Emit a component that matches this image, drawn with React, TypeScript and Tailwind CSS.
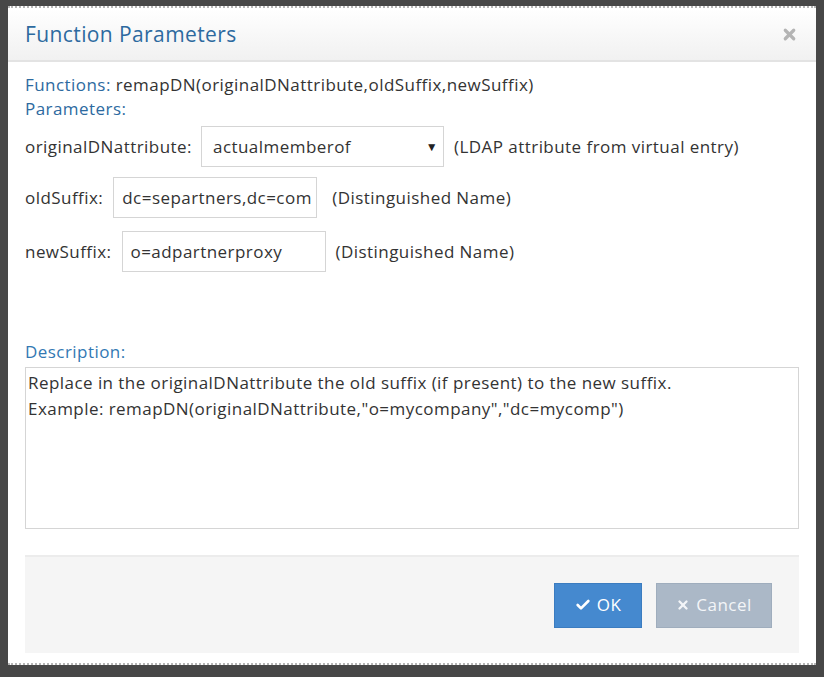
import { Check, X } from "lucide-react"

function Field({ label, value, width, hint, gap, top }: { label: string; value: string; width: string; hint: string; gap: string; top: string }) {
  return (
    <div className={`flex items-center ${top}`}>
      <span className="mr-[10px]">{label}</span>
      <div className={`h-[41px] ${width} border border-[#d5d5d5] bg-white flex items-center pl-[8px] shrink-0`}>{value}</div>
      <span className={gap}>{hint}</span>
    </div>
  )
}

export default function App() {
  return (
    <div className="w-[824px] h-[677px] bg-[#474747] pt-[6px] pl-[8px] overflow-hidden" style={{ fontFamily: '"Open Sans", "Liberation Sans", sans-serif' }}>
      <div className="w-[808px] h-[659px] bg-white border-t-2 border-b-2 border-dotted border-[#b5b5b5] flex flex-col text-[17px] tracking-[0.45px] text-[#333]">
        {/* header */}
        <div className="h-[54px] shrink-0 flex items-center justify-between pl-[17px] pr-[18px] bg-gradient-to-b from-white to-[#f1f1f1] border-b-2 border-[#e3e3e3]">
          <h2 className="text-[21px] tracking-[0.4px] text-[#2d6a9f] pt-[2px]">Function Parameters</h2>
          <X className="w-[17px] h-[17px] text-[#b4b4b4]" strokeWidth={4.5} />
        </div>

        {/* body */}
        <div className="flex flex-col px-[17px] pt-[12px]">
          <div className="leading-[22px]">
            <span className="text-[#2d6a9f]">Functions:</span> remapDN(originalDNattribute,oldSuffix,newSuffix)
          </div>
          <div className="leading-[22px] mt-[2px] text-[#2d6a9f]">Parameters:</div>

          <div className="flex flex-col mt-[6px]">
            <div className="flex items-center">
              <span className="mr-[9px]">originalDNattribute:</span>
              <div className="h-[41px] w-[243px] border border-[#d5d5d5] bg-white flex items-center justify-between pl-[11px] pr-[5px] shrink-0">
                <span>actualmemberof</span>
                <span className="text-[12px] text-[#222]">▼</span>
              </div>
              <span className="ml-[10px]">(LDAP attribute from virtual entry)</span>
            </div>
            <Field label="oldSuffix:" value="dc=separtners,dc=com" width="w-[204px]" hint="(Distinguished Name)" gap="ml-[15px]" top="mt-[10px]" />
            <Field label="newSuffix:" value="o=adpartnerproxy" width="w-[204px]" hint="(Distinguished Name)" gap="ml-[10px]" top="mt-[13px]" />
          </div>

          <div className="mt-[69px] text-[#3278b3] leading-[22px]">Description:</div>
          <div className="mt-[4px] h-[162px] border border-[#d5d5d5] px-[2px] pt-[2px] leading-[26px]">
            Replace in the originalDNattribute the old suffix (if present) to the new suffix.
            <br />
            Example: remapDN(originalDNattribute,"o=mycompany","dc=mycomp")
          </div>

          {/* footer */}
          <div className="mt-[26px] h-[98px] bg-[#f5f5f5] border-t-2 border-[#ececec] flex items-center justify-end gap-[14px] pr-[27px]">
            <button className="h-[45px] w-[88px] bg-[#4589cf] border border-[#3b7cc0] text-white flex items-center justify-center gap-[6px] text-[17px]">
              <Check className="w-[16px] h-[16px]" strokeWidth={4} />
              OK
            </button>
            <button className="h-[45px] w-[116px] bg-[#abb8c7] border border-[#9fadbd] text-[#f3f5f8] flex items-center justify-center gap-[6px] text-[17px]">
              <X className="w-[14px] h-[14px]" strokeWidth={4} />
              Cancel
            </button>
          </div>
        </div>
      </div>
    </div>
  )
}
